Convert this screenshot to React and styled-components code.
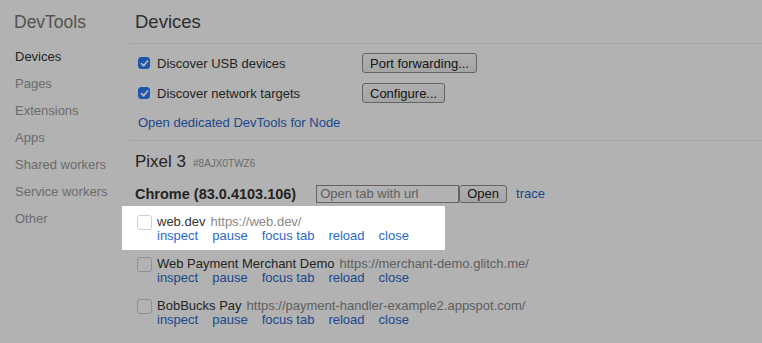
import React from "react";
import styled, { createGlobalStyle } from "styled-components";

const Global = createGlobalStyle`
  html, body { margin: 0; padding: 0; background: #fff; }
  body { font-family: "Liberation Sans", Arial, sans-serif; color: #333; overflow: hidden; }
  * { box-sizing: border-box; }
`;

const Page = styled.div`
  display: flex;
  width: 762px;
  height: 343px;
  background: #fff;
  position: relative;
`;

const Sidebar = styled.nav`
  width: 130px;
  flex: none;
  padding-left: 14px;
`;

const Brand = styled.div`
  font-size: 17.5px;
  line-height: 24px;
  margin-top: 10px;
  color: #777;
  margin-bottom: 15px;
`;

const NavItem = styled.div`
  font-size: 13px;
  line-height: 16px;
  height: 27px;
  padding-left: 1px;
  color: ${(p) => (p.$active ? "#333" : "#9a9a9a")};
`;

const Main = styled.main`
  flex: 1;
  min-width: 0;
`;

const Header = styled.div`
  margin-top: 10px;
  padding: 0 0 9px 5px;
  border-bottom: 1px solid #eee;
`;

const Heading = styled.h1`
  margin: 0;
  font-weight: normal;
  font-size: 18.5px;
  line-height: 24px;
  color: #444;
`;

const Section = styled.section`
  padding: 9px 0 9px 8px;
  border-bottom: 1px solid #eee;
`;

const OptionRow = styled.div`
  display: flex;
  align-items: center;
  height: 20px;
  margin-bottom: 10px;
`;

const OptionLabel = styled.label`
  display: flex;
  align-items: center;
  width: 224px;
  font-size: 13px;
  color: #333;
`;

const CheckBox = styled.span`
  display: inline-flex;
  align-items: center;
  justify-content: center;
  flex: none;
  width: ${(p) => (p.$checked ? "12px" : "15px")};
  height: ${(p) => (p.$checked ? "12px" : "15px")};
  border-radius: 3px;
  background: ${(p) => (p.$checked ? "#2d7cf6" : "#fff")};
  border: 1px solid ${(p) => (p.$checked ? "#2d7cf6" : "#cfcfcf")};
  margin-right: ${(p) => (p.$checked ? "7px" : "5px")};
`;

const Button = styled.button`
  font-family: "Liberation Sans", Arial, sans-serif;
  font-size: 13px;
  color: #222;
  height: ${(p) => (p.$small ? "18px" : "20px")};
  padding: 0 7px;
  background: linear-gradient(#fbfbfb, #ececec);
  border: 1px solid #8e8e8e;
  border-radius: 3px;
  line-height: 1;
`;

const Link = styled.a`
  color: #2a68c9;
  font-size: 13px;
  line-height: 16px;
  text-decoration: none;
  cursor: pointer;
  margin-right: ${(p) => (p.$gap ? "14px" : "0")};
`;

const DeviceSection = styled.section`
  padding-left: 5px;
`;

const DeviceTitle = styled.div`
  margin-top: 10px;
  display: flex;
  align-items: baseline;
  font-size: 17px;
  line-height: 22px;
  color: #333;
`;

const Serial = styled.span`
  font-size: 10px;
  color: #999;
  margin-left: 7px;
`;

const BrowserRow = styled.div`
  margin-top: 9px;
  display: flex;
  align-items: center;
  height: 19px;
`;

const BrowserName = styled.span`
  font-weight: bold;
  font-size: 14.5px;
  color: #333;
  margin-right: 20px;
`;

const UrlInput = styled.input`
  width: 143px;
  height: 18px;
  border: 1px solid #8e8e8e;
  font-family: "Liberation Sans", Arial, sans-serif;
  font-size: 13px;
  padding: 0 3px;
  color: #333;
  &::placeholder { color: #8a8a8a; }
`;

const Trace = styled(Link)`
  margin-left: 9px;
`;

const PageList = styled.div`
  margin-top: 3px;
`;

const PageRow = styled.div`
  display: flex;
  align-items: flex-start;
  width: 323px;
  margin-left: -13px;
  padding: ${(p) => (p.$highlight ? "9px 0 7px 15px" : "7px 0 7px 15px")};
  background: ${(p) => (p.$highlight ? "#fff" : "transparent")};
  position: relative;
  z-index: ${(p) => (p.$highlight ? 1 : "auto")};
  box-shadow: ${(p) => (p.$highlight ? "0 0 0 2000px rgba(0,0,0,0.3)" : "none")};
`;

const PageInfo = styled.div`
  display: flex;
  flex-direction: column;
`;

const PageTitle = styled.div`
  font-size: 13px;
  line-height: 14px;
  white-space: nowrap;
  color: #333;
`;

const PageUrl = styled.span`
  color: #888;
  margin-left: 5px;
`;

const Actions = styled.div`
  display: flex;
  line-height: 14px;
  & > a { line-height: 14px; }
`;

const Check = () => (
  <svg width="9" height="9" viewBox="0 0 10 10">
    <path d="M1.6 5.2 L4 7.6 L8.4 2.2" fill="none" stroke="#fff" strokeWidth="2" strokeLinecap="round" strokeLinejoin="round" />
  </svg>
);

const pages = [
  { title: "web.dev", url: "https://web.dev/", highlight: true },
  { title: "Web Payment Merchant Demo", url: "https://merchant-demo.glitch.me/" },
  { title: "BobBucks Pay", url: "https://payment-handler-example2.appspot.com/" },
];

const actions = ["inspect", "pause", "focus tab", "reload", "close"];

export default function App() {
  return (
    <>
      <Global />
      <Page>
        <Sidebar>
          <Brand>DevTools</Brand>
          {["Devices", "Pages", "Extensions", "Apps", "Shared workers", "Service workers", "Other"].map((n, i) => (
            <NavItem key={n} $active={i === 0}>{n}</NavItem>
          ))}
        </Sidebar>
        <Main>
          <Header>
            <Heading>Devices</Heading>
          </Header>
          <Section>
            <OptionRow>
              <OptionLabel>
                <CheckBox $checked><Check /></CheckBox>
                Discover USB devices
              </OptionLabel>
              <Button>Port forwarding...</Button>
            </OptionRow>
            <OptionRow>
              <OptionLabel>
                <CheckBox $checked><Check /></CheckBox>
                Discover network targets
              </OptionLabel>
              <Button>Configure...</Button>
            </OptionRow>
            <Link>Open dedicated DevTools for Node</Link>
          </Section>
          <DeviceSection>
            <DeviceTitle>
              Pixel 3<Serial>#8AJX0TWZ6</Serial>
            </DeviceTitle>
            <BrowserRow>
              <BrowserName>Chrome (83.0.4103.106)</BrowserName>
              <UrlInput placeholder="Open tab with url" />
              <Button $small>Open</Button>
              <Trace>trace</Trace>
            </BrowserRow>
            <PageList>
              {pages.map((p) => (
                <PageRow key={p.title} $highlight={p.highlight}>
                  <CheckBox />
                  <PageInfo>
                    <PageTitle>
                      {p.title}
                      <PageUrl>{p.url}</PageUrl>
                    </PageTitle>
                    <Actions>
                      {actions.map((a, i) => (
                        <Link key={a} $gap={i < actions.length - 1}>{a}</Link>
                      ))}
                    </Actions>
                  </PageInfo>
                </PageRow>
              ))}
            </PageList>
          </DeviceSection>
        </Main>
      </Page>
    </>
  );
}
